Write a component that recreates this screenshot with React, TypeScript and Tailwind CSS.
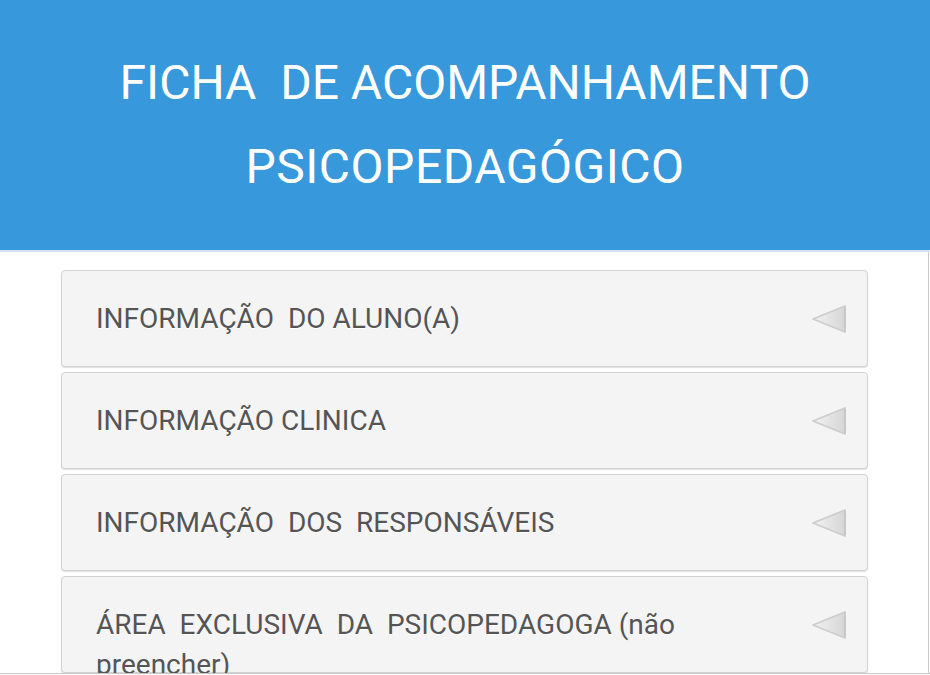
import React from "react";

const items = [
  "INFORMAÇÃO  DO ALUNO(A)",
  "INFORMAÇÃO CLINICA",
  "INFORMAÇÃO  DOS  RESPONSÁVEIS",
  "ÁREA  EXCLUSIVA  DA  PSICOPEDAGOGA (não preencher)",
];

function Arrow() {
  return (
    <svg width="38" height="32" viewBox="0 0 38 32" className="shrink-0">
      <defs>
        <linearGradient id="ag" x1="0" y1="0" x2="1" y2="0">
          <stop offset="0" stopColor="#f2f2f2" />
          <stop offset="1" stopColor="#d6d6d6" />
        </linearGradient>
      </defs>
      <polygon
        points="3,16 35,3 35,29"
        fill="url(#ag)"
        stroke="#cdcdcd"
        strokeWidth="1.8"
        strokeLinejoin="round"
      />
      <line x1="35" y1="4" x2="35" y2="28" stroke="#c6c6c6" strokeWidth="1.6" />
    </svg>
  );
}

export default function App() {
  return (
    <div
      className="w-[930px] h-[675px] overflow-hidden bg-white"
      style={{ fontFamily: "Roboto, 'Noto Sans', sans-serif" }}
    >
      <header className="h-[250px] bg-[#3798db] flex flex-col items-center justify-center text-white text-[48px] leading-[84px] whitespace-pre">
        <div>FICHA  DE ACOMPANHAMENTO</div>
        <div className="tracking-[0.5px]">PSICOPEDAGÓGICO</div>
      </header>
      <div className="h-[2px] bg-[#d3e5f3]" />
      <div className="h-[422px] border-b border-[#c9c9c9] flex">
        <div className="w-[929px] border-r border-[#c9c9c9] overflow-hidden pt-[18px]">
          <div className="ml-[61px] w-[807px] flex flex-col gap-[5px]">
            {items.map((t) => (
              <div
                key={t}
                className="h-[97px] bg-[#f4f4f4] border border-[#d2d2d2] rounded-[4px] shadow-[0_1px_1px_rgba(0,0,0,0.12)] flex items-start pl-[34px] pr-[19px]"
              >
                <div className="flex-1 pt-[28px] pr-[20px] text-[28px] leading-[40px] text-[#555555] whitespace-pre-wrap [text-shadow:0_1px_0_#ffffff]">
                  {t}
                </div>
                <div className="self-center">
                  <Arrow />
                </div>
              </div>
            ))}
          </div>
        </div>
      </div>
    </div>
  );
}
